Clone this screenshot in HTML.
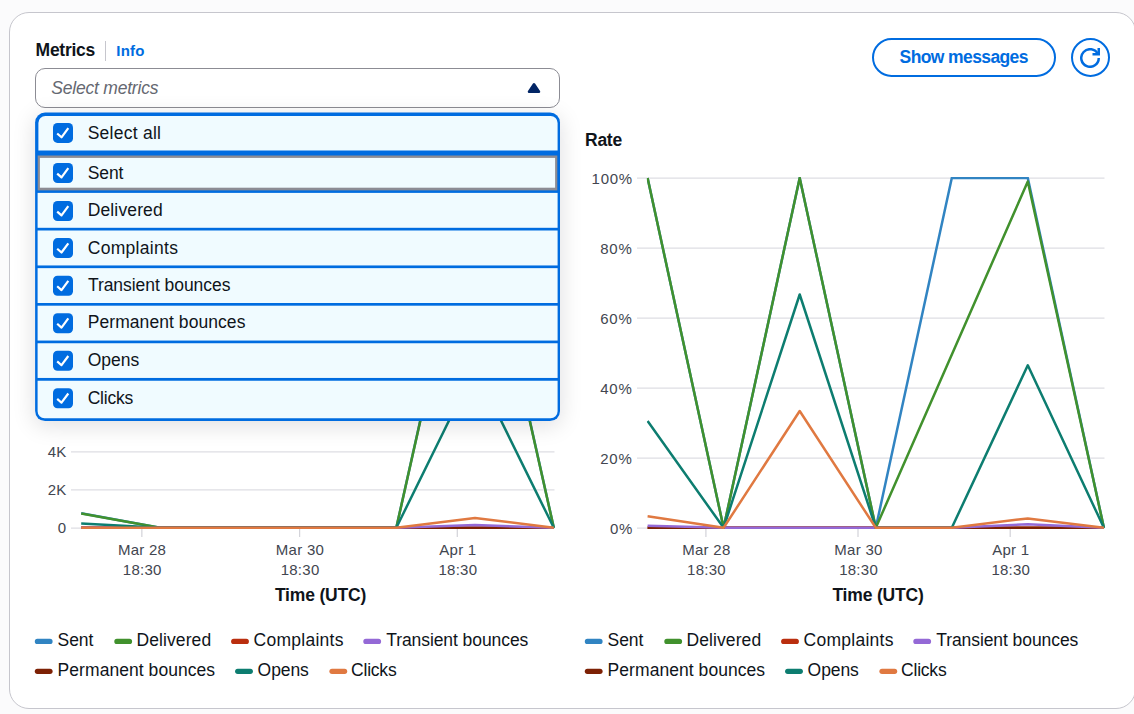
<!DOCTYPE html>
<html lang="en">
<head>
<meta charset="utf-8">
<title>Metrics</title>
<style>
*{box-sizing:border-box;margin:0;padding:0}
html,body{width:1134px;height:714px;overflow:hidden;background:#fbfbfc}
body{position:relative;font-family:"Liberation Sans",sans-serif;color:#0f141a;font-size:17.5px}
.abs{position:absolute;white-space:nowrap}
.card{position:absolute;left:9px;top:12px;width:1127px;height:697px;background:#fff;border:1px solid #c6c6cd;border-radius:20px}
.h-metrics{font-weight:700;font-size:17.5px;line-height:22px;letter-spacing:-0.1px}
.h-div{left:105px;top:41px;width:1px;height:20px;background:#c6c6cd}
.h-info{font-weight:700;font-size:15px;line-height:22px;color:#006ce0;letter-spacing:0.3px}
.trigger{left:35px;top:68px;width:525px;height:40px;border:1px solid #8c8c94;border-radius:10px}
.placeholder{font-style:italic;color:#656871;font-size:17.5px;line-height:22px;letter-spacing:-0.16px}
.btn{left:872px;top:38px;width:184px;height:39px;border:2px solid #006ce0;border-radius:20px;color:#006ce0;font-weight:700;font-size:17.5px;line-height:35px;text-align:center}
.rbtn{left:1071px;top:38px;width:39px;height:39px;border:2px solid #006ce0;border-radius:50%;background:#fff}
.ddshadow{left:35px;top:113px;width:525px;height:308px;border-radius:10px;box-shadow:0 4px 22px 1px rgba(0,7,22,.125)}
.ax{font-size:15px;line-height:22px;color:#424650}
.axb{font-size:17.5px;line-height:22px;font-weight:700;color:#0f141a}
.lg{font-size:17.5px;line-height:22px;color:#0f141a}
.btxt{color:#006ce0;font-weight:700;font-size:17.5px;line-height:22px}
</style>
</head>
<body>
<div class="card"></div>

<!--HEADER-->
<div class="abs h-metrics" style="left:35.60px;top:39.00px;letter-spacing:-0.267px">Metrics</div>
<div class="abs h-info" style="left:116.30px;top:40.00px;letter-spacing:0.233px">Info</div>
<div class="abs placeholder" style="left:51.20px;top:77.10px;letter-spacing:-0.200px">Select metrics</div>
<div class="abs btxt" style="left:899.60px;top:46.00px;letter-spacing:-0.608px">Show messages</div>
<!--/HEADER-->
<div class="abs h-div"></div>
<div class="abs trigger"></div>
<svg class="abs" style="left:524px;top:77.7px" width="20" height="20" viewBox="0 0 16 16"><path d="m8 5 4 6H4l4-6Z" fill="#022565" stroke="#022565" stroke-width="2" stroke-linejoin="round"/></svg>
<div class="abs btn"></div>
<div class="abs rbtn"><svg style="position:absolute;left:7px;top:8px" width="20" height="20" viewBox="0 0 16 16" fill="none" stroke="#006ce0" stroke-width="2"><path d="M15 8A7 7 0 1 1 14.33 5"/><path d="M15 0v5h-5"/></svg></div>

<!--CHARTS-->
<svg class="abs" style="left:0;top:0" width="1134" height="714" viewBox="0 0 1134 714">
<defs><clipPath id="cl"><rect x="80.9" y="110" width="475" height="420"/></clipPath><clipPath id="cr"><rect x="646.8" y="177" width="460" height="353"/></clipPath></defs>
<line x1="71" x2="554.5" y1="528.0" y2="528.0" stroke="#dedee3" stroke-width="1.25"/>
<line x1="71" x2="554.5" y1="489.9" y2="489.9" stroke="#dedee3" stroke-width="1.25"/>
<line x1="71" x2="554.5" y1="451.8" y2="451.8" stroke="#dedee3" stroke-width="1.25"/>
<line x1="71" x2="554.5" y1="413.7" y2="413.7" stroke="#dedee3" stroke-width="1.25"/>
<line x1="71" x2="554.5" y1="375.6" y2="375.6" stroke="#dedee3" stroke-width="1.25"/>
<line x1="71" x2="554.5" y1="337.5" y2="337.5" stroke="#dedee3" stroke-width="1.25"/>
<line x1="71" x2="554.5" y1="299.4" y2="299.4" stroke="#dedee3" stroke-width="1.25"/>
<line x1="71" x2="554.5" y1="261.3" y2="261.3" stroke="#dedee3" stroke-width="1.25"/>
<line x1="71" x2="554.5" y1="223.2" y2="223.2" stroke="#dedee3" stroke-width="1.25"/>
<line x1="71" x2="554.5" y1="185.1" y2="185.1" stroke="#dedee3" stroke-width="1.25"/>
<line x1="71" x2="554.5" y1="147.0" y2="147.0" stroke="#dedee3" stroke-width="1.25"/>
<line x1="141.85" x2="141.85" y1="528" y2="537" stroke="#d4d4da" stroke-width="1.25"/>
<line x1="299.6" x2="299.6" y1="528" y2="537" stroke="#d4d4da" stroke-width="1.25"/>
<line x1="457.3" x2="457.3" y1="528" y2="537" stroke="#d4d4da" stroke-width="1.25"/>
<g clip-path="url(#cl)">
<polyline points="81.2,513.3 160.0,527.8 238.7,527.8 317.5,527.8 396.3,527.8 475.0,175.4 553.8,527.8" fill="none" stroke="#3184c2" stroke-width="2.5" stroke-linejoin="round"/>
<polyline points="81.2,513.6 160.0,527.8 238.7,527.8 317.5,527.8 396.3,527.8 475.0,177.3 553.8,527.8" fill="none" stroke="#41912d" stroke-width="2.5" stroke-linejoin="round"/>
<polyline points="81.2,527.8 160.0,527.8 238.7,527.8 317.5,527.8 396.3,527.8 475.0,527.8 553.8,527.8" fill="none" stroke="#ba2e0f" stroke-width="2.5" stroke-linejoin="round"/>
<polyline points="81.2,527.8 160.0,527.8 238.7,527.8 317.5,527.8 396.3,527.8 475.0,527.8 553.8,527.8" fill="none" stroke="#7d2105" stroke-width="2.5" stroke-linejoin="round"/>
<polyline points="81.2,527.8 160.0,527.8 238.7,527.8 317.5,527.8 396.3,527.8 475.0,525.1 553.8,527.8" fill="none" stroke="#9469d6" stroke-width="2.5" stroke-linejoin="round"/>
<polyline points="81.2,523.5 160.0,527.8 238.7,527.8 317.5,527.8 396.3,527.8 475.0,367.8 553.8,527.8" fill="none" stroke="#0d7d70" stroke-width="2.5" stroke-linejoin="round"/>
<polyline points="81.2,527.8 160.0,527.8 238.7,527.8 317.5,527.8 396.3,527.8 475.0,517.9 553.8,527.8" fill="none" stroke="#e07941" stroke-width="2.5" stroke-linejoin="round"/>
</g>
<line x1="637" x2="1104.5" y1="528.0" y2="528.0" stroke="#dedee3" stroke-width="1.25"/>
<line x1="637" x2="1104.5" y1="458.0" y2="458.0" stroke="#dedee3" stroke-width="1.25"/>
<line x1="637" x2="1104.5" y1="388.0" y2="388.0" stroke="#dedee3" stroke-width="1.25"/>
<line x1="637" x2="1104.5" y1="318.0" y2="318.0" stroke="#dedee3" stroke-width="1.25"/>
<line x1="637" x2="1104.5" y1="248.0" y2="248.0" stroke="#dedee3" stroke-width="1.25"/>
<line x1="637" x2="1104.5" y1="178.0" y2="178.0" stroke="#dedee3" stroke-width="1.25"/>
<line x1="705.9" x2="705.9" y1="528" y2="537" stroke="#d4d4da" stroke-width="1.25"/>
<line x1="858" x2="858" y1="528" y2="537" stroke="#d4d4da" stroke-width="1.25"/>
<line x1="1010.2" x2="1010.2" y1="528" y2="537" stroke="#d4d4da" stroke-width="1.25"/>
<g clip-path="url(#cr)">
<polyline points="647.6,178.0 723.6,527.8 799.7,178.0 875.8,527.8 951.8,178.0 1027.8,178.0 1103.9,527.8" fill="none" stroke="#3184c2" stroke-width="2.5" stroke-linejoin="round"/>
<polyline points="647.6,178.0 723.6,527.8 799.7,178.0 875.8,527.8 1027.8,181.5 1103.9,527.8" fill="none" stroke="#41912d" stroke-width="2.5" stroke-linejoin="round"/>
<polyline points="647.6,527.8 723.6,527.8 799.7,527.8 875.8,527.8 951.8,527.8 1027.8,527.8 1103.9,527.8" fill="none" stroke="#ba2e0f" stroke-width="2.5" stroke-linejoin="round"/>
<polyline points="647.6,527.8 723.6,527.8 799.7,527.8 875.8,527.8 951.8,527.8 1027.8,527.8 1103.9,527.8" fill="none" stroke="#7d2105" stroke-width="2.5" stroke-linejoin="round"/>
<polyline points="647.6,525.7 723.6,527.8 799.7,527.8 875.8,527.8 951.8,527.8 1027.8,524.3 1103.9,527.8" fill="none" stroke="#9469d6" stroke-width="2.5" stroke-linejoin="round"/>
<polyline points="647.6,421.1 723.6,527.8 799.7,294.5 875.8,527.8 951.8,527.8 1027.8,365.3 1103.9,527.8" fill="none" stroke="#0d7d70" stroke-width="2.5" stroke-linejoin="round"/>
<polyline points="647.6,516.3 723.6,527.8 799.7,411.0 875.8,527.8 951.8,527.8 1027.8,518.4 1103.9,527.8" fill="none" stroke="#e07941" stroke-width="2.5" stroke-linejoin="round"/>
</g>
</svg>
<!--/CHARTS-->

<!--DROPDOWN-->
<div class="abs ddshadow"></div>
<svg class="abs" style="left:0;top:0" width="1134" height="714" viewBox="0 0 1134 714">
<rect x="35.1" y="112.6" width="524.9" height="308.5" rx="10" fill="#006ce0"/>
<path d="M45.4 115.9H550.6A7 7 0 0 1 557.6 122.9V150.6A0 0 0 0 1 557.6 150.6H38.4A0 0 0 0 1 38.4 150.6V122.9A7 7 0 0 1 45.4 115.9Z" fill="#f0fbff"/>
<rect x="37.7" y="155.5" width="519.5999999999999" height="34.900000000000006" fill="#8c8c94"/>
<rect x="39.9" y="157.9" width="515.2" height="29.8" fill="#f0fbff"/>
<rect x="37.6" y="192.90" width="520" height="34.90" fill="#f0fbff"/>
<rect x="37.6" y="230.50" width="520" height="34.95" fill="#f0fbff"/>
<rect x="37.6" y="268.15" width="520" height="34.85" fill="#f0fbff"/>
<rect x="37.6" y="305.70" width="520" height="34.85" fill="#f0fbff"/>
<rect x="37.6" y="343.25" width="520" height="34.70" fill="#f0fbff"/>
<path d="M37.6 380.65000000000003H557.6A0 0 0 0 1 557.6 380.65000000000003V411.3A7 7 0 0 1 550.6 418.3H44.6A7 7 0 0 1 37.6 411.3V380.65000000000003A0 0 0 0 1 37.6 380.65000000000003Z" fill="#f0fbff"/>
<rect x="53" y="122.9" width="20" height="20" rx="4.5" fill="#006ce0"/>
<path d="M57.2 133.5L61.5 137.3L68.3 128.1" fill="none" stroke="#fff" stroke-width="2.2" stroke-linejoin="round"/>
<rect x="53" y="163" width="20" height="20" rx="4.5" fill="#006ce0"/>
<path d="M57.2 173.6L61.5 177.4L68.3 168.2" fill="none" stroke="#fff" stroke-width="2.2" stroke-linejoin="round"/>
<rect x="53" y="201" width="20" height="20" rx="4.5" fill="#006ce0"/>
<path d="M57.2 211.6L61.5 215.4L68.3 206.2" fill="none" stroke="#fff" stroke-width="2.2" stroke-linejoin="round"/>
<rect x="53" y="238.1" width="20" height="20" rx="4.5" fill="#006ce0"/>
<path d="M57.2 248.7L61.5 252.5L68.3 243.3" fill="none" stroke="#fff" stroke-width="2.2" stroke-linejoin="round"/>
<rect x="53" y="275.7" width="20" height="20" rx="4.5" fill="#006ce0"/>
<path d="M57.2 286.3L61.5 290.1L68.3 280.9" fill="none" stroke="#fff" stroke-width="2.2" stroke-linejoin="round"/>
<rect x="53" y="313.2" width="20" height="20" rx="4.5" fill="#006ce0"/>
<path d="M57.2 323.8L61.5 327.6L68.3 318.4" fill="none" stroke="#fff" stroke-width="2.2" stroke-linejoin="round"/>
<rect x="53" y="350.8" width="20" height="20" rx="4.5" fill="#006ce0"/>
<path d="M57.2 361.4L61.5 365.2L68.3 356.0" fill="none" stroke="#fff" stroke-width="2.2" stroke-linejoin="round"/>
<rect x="53" y="388.3" width="20" height="20" rx="4.5" fill="#006ce0"/>
<path d="M57.2 398.9L61.5 402.7L68.3 393.5" fill="none" stroke="#fff" stroke-width="2.2" stroke-linejoin="round"/>
</svg>
<div class="abs lg" style="left:87.70px;top:121.70px;letter-spacing:0.256px">Select all</div>
<div class="abs lg" style="left:87.70px;top:162.00px;letter-spacing:-0.067px">Sent</div>
<div class="abs lg" style="left:87.70px;top:199.00px;letter-spacing:0.138px">Delivered</div>
<div class="abs lg" style="left:87.70px;top:236.60px;letter-spacing:0.311px">Complaints</div>
<div class="abs lg" style="left:87.90px;top:273.80px;letter-spacing:-0.050px">Transient bounces</div>
<div class="abs lg" style="left:87.70px;top:311.40px;letter-spacing:0.069px">Permanent bounces</div>
<div class="abs lg" style="left:87.70px;top:349.00px;letter-spacing:0.000px">Opens</div>
<div class="abs lg" style="left:87.70px;top:386.80px;letter-spacing:-0.220px">Clicks</div>
<!--/DROPDOWN-->

<!--LABELS-->
<div class="abs ax" style="left:47.80px;top:441.00px;letter-spacing:0.000px">4K</div>
<div class="abs ax" style="left:47.80px;top:479.10px;letter-spacing:0.000px">2K</div>
<div class="abs ax" style="left:57.80px;top:517.20px;letter-spacing:0.000px">0</div>
<div class="abs ax" style="left:591.60px;top:167.60px;letter-spacing:0.700px">100%</div>
<div class="abs ax" style="left:600.30px;top:237.60px;letter-spacing:0.700px">80%</div>
<div class="abs ax" style="left:600.30px;top:307.60px;letter-spacing:0.700px">60%</div>
<div class="abs ax" style="left:600.30px;top:377.60px;letter-spacing:0.700px">40%</div>
<div class="abs ax" style="left:600.30px;top:447.60px;letter-spacing:0.700px">20%</div>
<div class="abs ax" style="left:610.00px;top:517.60px;letter-spacing:0.700px">0%</div>
<div class="abs ax" style="left:117.95px;top:539.10px;letter-spacing:0.260px">Mar 28</div>
<div class="abs ax" style="left:122.80px;top:559.00px;letter-spacing:0.250px">18:30</div>
<div class="abs ax" style="left:275.85px;top:539.10px;letter-spacing:0.260px">Mar 30</div>
<div class="abs ax" style="left:280.70px;top:559.00px;letter-spacing:0.250px">18:30</div>
<div class="abs ax" style="left:439.28px;top:539.10px;letter-spacing:0.260px">Apr 1</div>
<div class="abs ax" style="left:438.50px;top:559.00px;letter-spacing:0.250px">18:30</div>
<div class="abs ax" style="left:682.25px;top:539.10px;letter-spacing:0.260px">Mar 28</div>
<div class="abs ax" style="left:687.10px;top:559.00px;letter-spacing:0.250px">18:30</div>
<div class="abs ax" style="left:834.35px;top:539.10px;letter-spacing:0.260px">Mar 30</div>
<div class="abs ax" style="left:839.20px;top:559.00px;letter-spacing:0.250px">18:30</div>
<div class="abs ax" style="left:992.18px;top:539.10px;letter-spacing:0.260px">Apr 1</div>
<div class="abs ax" style="left:991.40px;top:559.00px;letter-spacing:0.250px">18:30</div>
<div class="abs axb" style="left:274.90px;top:583.90px;letter-spacing:-0.167px">Time (UTC)</div>
<div class="abs axb" style="left:832.40px;top:583.90px;letter-spacing:-0.167px">Time (UTC)</div>
<div class="abs axb" style="left:585.10px;top:129.00px;letter-spacing:-0.300px">Rate</div>
<svg class="abs" style="left:0;top:0" width="1134" height="714" viewBox="0 0 1134 714">
<rect x="34.8" y="638.8" width="17.8" height="5.2" rx="2.6" fill="#3184c2"/>
<rect x="114.3" y="638.8" width="17.8" height="5.2" rx="2.6" fill="#41912d"/>
<rect x="231.1" y="638.8" width="17.8" height="5.2" rx="2.6" fill="#ba2e0f"/>
<rect x="363.3" y="638.8" width="17.8" height="5.2" rx="2.6" fill="#9469d6"/>
<rect x="34.8" y="668.7" width="17.8" height="5.2" rx="2.6" fill="#7d2105"/>
<rect x="235.1" y="668.7" width="17.8" height="5.2" rx="2.6" fill="#0d7d70"/>
<rect x="329.4" y="668.7" width="17.8" height="5.2" rx="2.6" fill="#e07941"/>
<rect x="584.8" y="638.8" width="17.8" height="5.2" rx="2.6" fill="#3184c2"/>
<rect x="664.3" y="638.8" width="17.8" height="5.2" rx="2.6" fill="#41912d"/>
<rect x="781.1" y="638.8" width="17.8" height="5.2" rx="2.6" fill="#ba2e0f"/>
<rect x="913.3" y="638.8" width="17.8" height="5.2" rx="2.6" fill="#9469d6"/>
<rect x="584.8" y="668.7" width="17.8" height="5.2" rx="2.6" fill="#7d2105"/>
<rect x="785.1" y="668.7" width="17.8" height="5.2" rx="2.6" fill="#0d7d70"/>
<rect x="879.4" y="668.7" width="17.8" height="5.2" rx="2.6" fill="#e07941"/>
</svg>
<div class="abs lg" style="left:57.60px;top:628.70px;letter-spacing:-0.100px">Sent</div>
<div class="abs lg" style="left:136.60px;top:628.70px;letter-spacing:0.075px">Delivered</div>
<div class="abs lg" style="left:253.50px;top:628.70px;letter-spacing:0.267px">Complaints</div>
<div class="abs lg" style="left:386.20px;top:628.70px;letter-spacing:-0.075px">Transient bounces</div>
<div class="abs lg" style="left:57.60px;top:658.60px;letter-spacing:0.056px">Permanent bounces</div>
<div class="abs lg" style="left:257.60px;top:658.60px;letter-spacing:-0.075px">Opens</div>
<div class="abs lg" style="left:351.00px;top:658.60px;letter-spacing:-0.200px">Clicks</div>
<div class="abs lg" style="left:607.60px;top:628.70px;letter-spacing:-0.100px">Sent</div>
<div class="abs lg" style="left:686.60px;top:628.70px;letter-spacing:0.075px">Delivered</div>
<div class="abs lg" style="left:803.50px;top:628.70px;letter-spacing:0.267px">Complaints</div>
<div class="abs lg" style="left:936.20px;top:628.70px;letter-spacing:-0.075px">Transient bounces</div>
<div class="abs lg" style="left:607.60px;top:658.60px;letter-spacing:0.056px">Permanent bounces</div>
<div class="abs lg" style="left:807.60px;top:658.60px;letter-spacing:-0.075px">Opens</div>
<div class="abs lg" style="left:901.00px;top:658.60px;letter-spacing:-0.200px">Clicks</div>
<!--/LABELS-->

</body>
</html>
